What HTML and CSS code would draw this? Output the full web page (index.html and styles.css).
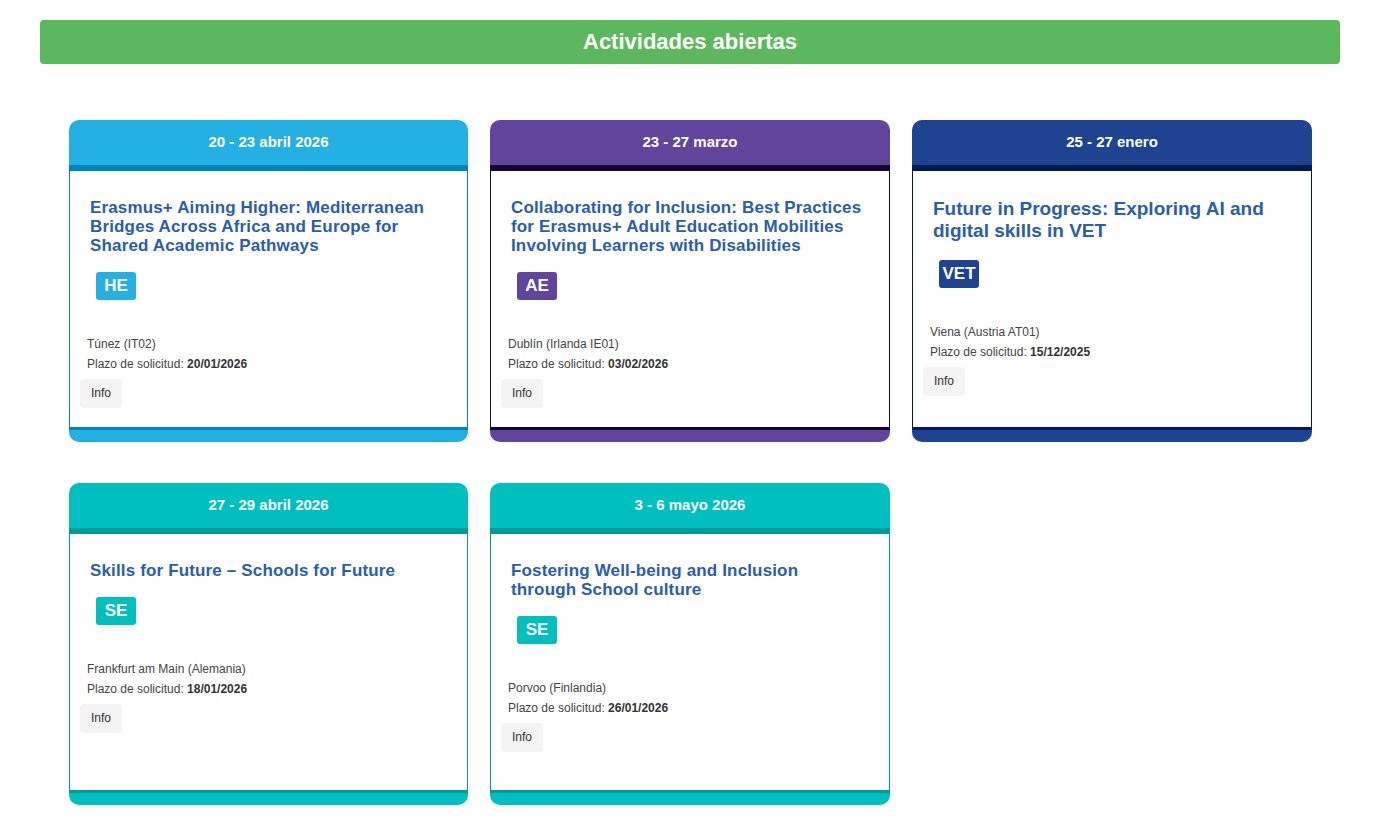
FILE: index.html
```html
<!DOCTYPE html>
<html lang="es">
<head>
<meta charset="utf-8">
<title>Actividades abiertas</title>
<link rel="stylesheet" href="styles.css">
</head>
<body>
<div class="page">
  <h2 class="banner">Actividades abiertas</h2>
  <div class="grid">
    <div class="card card-he">
      <div class="card-head">20 - 23 abril 2026</div>
      <div class="card-body">
        <h3 class="title">Erasmus+ Aiming Higher: Mediterranean Bridges Across Africa and Europe for Shared Academic Pathways</h3>
        <span class="badge">HE</span>
        <div class="meta">
          <div>Túnez (IT02)</div>
          <div>Plazo de solicitud: <b>20/01/2026</b></div>
        </div>
        <a class="info" href="#">Info</a>
      </div>
      <div class="card-foot"></div>
    </div>
    <div class="card card-ae">
      <div class="card-head">23 - 27 marzo</div>
      <div class="card-body">
        <h3 class="title">Collaborating for Inclusion: Best Practices for Erasmus+ Adult Education Mobilities Involving Learners with Disabilities</h3>
        <span class="badge">AE</span>
        <div class="meta">
          <div>Dublín (Irlanda IE01)</div>
          <div>Plazo de solicitud: <b>03/02/2026</b></div>
        </div>
        <a class="info" href="#">Info</a>
      </div>
      <div class="card-foot"></div>
    </div>
    <div class="card card-vet">
      <div class="card-head">25 - 27 enero</div>
      <div class="card-body">
        <h3 class="title title-lg">Future in Progress: Exploring AI and digital skills in VET</h3>
        <span class="badge">VET</span>
        <div class="meta">
          <div>Viena (Austria AT01)</div>
          <div>Plazo de solicitud: <b>15/12/2025</b></div>
        </div>
        <a class="info" href="#">Info</a>
      </div>
      <div class="card-foot"></div>
    </div>
    <div class="card card-se">
      <div class="card-head">27 - 29 abril 2026</div>
      <div class="card-body">
        <h3 class="title">Skills for Future – Schools for Future</h3>
        <span class="badge">SE</span>
        <div class="meta">
          <div>Frankfurt am Main (Alemania)</div>
          <div>Plazo de solicitud: <b>18/01/2026</b></div>
        </div>
        <a class="info" href="#">Info</a>
      </div>
      <div class="card-foot"></div>
    </div>
    <div class="card card-se">
      <div class="card-head">3 - 6 mayo 2026</div>
      <div class="card-body">
        <h3 class="title">Fostering Well-being and Inclusion through School culture</h3>
        <span class="badge">SE</span>
        <div class="meta">
          <div>Porvoo (Finlandia)</div>
          <div>Plazo de solicitud: <b>26/01/2026</b></div>
        </div>
        <a class="info" href="#">Info</a>
      </div>
      <div class="card-foot"></div>
    </div>
  </div>
</div>
</body>
</html>
```

FILE: styles.css
```css
* { box-sizing: border-box; }
html, body { margin: 0; padding: 0; background: #fff; }
body { font-family: "Liberation Sans", Arial, sans-serif; }

.page {
  padding: 20px 0 0 40px;
}

.banner {
  width: 1300px;
  height: 44px;
  margin: 0;
  background: #5cb85c;
  border-radius: 4px;
  color: #fff;
  font-size: 22px;
  font-weight: bold;
  line-height: 44px;
  text-align: center;
}

.grid {
  display: grid;
  grid-template-columns: 399px 400px 400px;
  column-gap: 22px;
  row-gap: 41px;
  padding: 56px 0 0 29px;
}

.card {
  --c: #25b0e4;
  --d: #0086bf;
  display: flex;
  flex-direction: column;
  height: 322px;
}
.card-he  { --c: #25b0e4; --d: #0086bf; }
.card-ae  { --c: #61449b; --d: #15033a; }
.card-vet { --c: #1e4391; --d: #001b53; }
.card-se  { --c: #00bfbf; --d: #009a98; }

.card-head {
  height: 45px;
  background: var(--c);
  border-radius: 10px 10px 0 0;
  color: #fff;
  font-size: 15px;
  font-weight: bold;
  line-height: 43px;
  text-align: center;
}

.card-body {
  flex: 1;
  display: flex;
  flex-direction: column;
  align-items: flex-start;
  border-top: 6px solid var(--d);
  border-left: 1px solid var(--d);
  border-right: 1px solid var(--d);
  padding: 27px 10px 0 10px;
}

.title {
  margin: 0 14px 17px 10px;
  color: #2b5dab;
  font-size: 17px;
  line-height: 19px;
  font-weight: bold;
  letter-spacing: 0.15px;
}
.title-lg {
  font-size: 19px;
  line-height: 22px;
  letter-spacing: 0;
  margin-bottom: 18px;
}

.badge {
  display: inline-block;
  min-width: 40px;
  height: 28px;
  margin-left: 16px;
  padding: 0 3px;
  background: var(--c);
  border-radius: 3px;
  color: #fff;
  font-size: 17px;
  font-weight: bold;
  line-height: 28px;
  text-align: center;
}

.meta {
  margin: 34px 0 0 7px;
  color: #444;
  font-size: 12px;
  line-height: 20px;
}
.meta b { color: #333; }

.info {
  display: inline-block;
  margin-top: 5px;
  padding: 7px 11px;
  background: #f4f4f4;
  border-radius: 4px;
  color: #333;
  font-size: 12px;
  line-height: 15px;
  text-decoration: none;
}

.card-foot {
  height: 15px;
  background: var(--c);
  border-top: 3px solid var(--d);
  border-radius: 0 0 10px 10px;
}
```
